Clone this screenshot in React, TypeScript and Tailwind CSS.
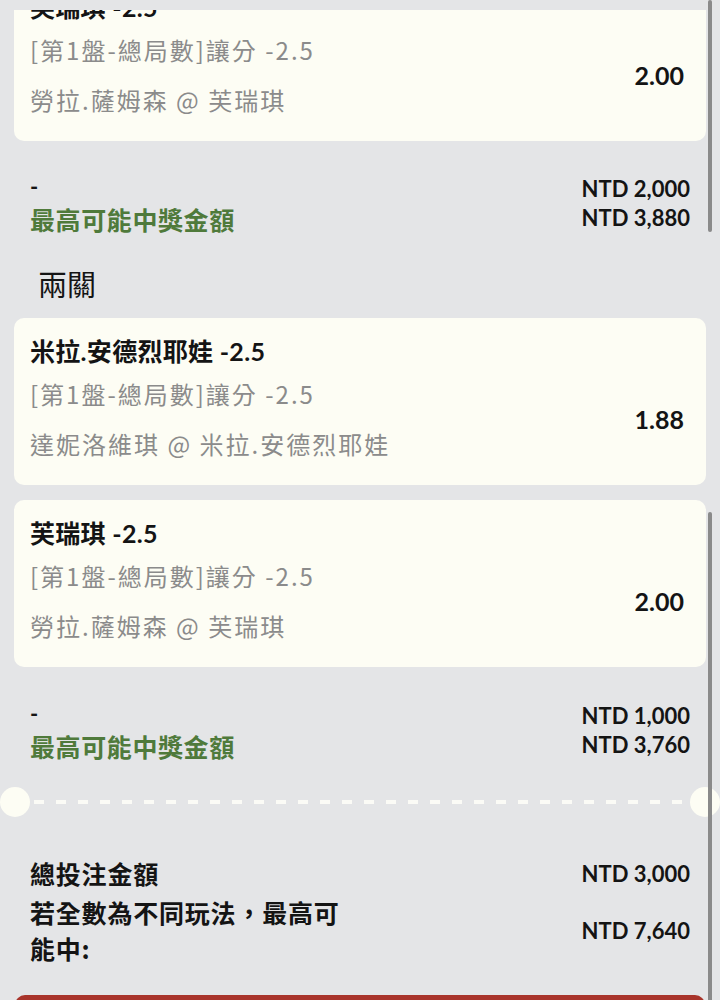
const LATIN = "font-['Lato','Noto_Sans_CJK_TC',sans-serif]";
const CJK = "font-['Noto_Sans_CJK_TC','Noto_Sans',sans-serif]";

type Bet = {
  pick: string;
  market: string;
  match: string;
  odds: string;
};

const FIRST_LEG: Bet[] = [
  {
    pick: "芙瑞琪 -2.5",
    market: "[第1盤-總局數]讓分 -2.5",
    match: "勞拉.薩姆森 @ 芙瑞琪",
    odds: "2.00",
  },
];

const PARLAY: Bet[] = [
  {
    pick: "米拉.安德烈耶娃 -2.5",
    market: "[第1盤-總局數]讓分 -2.5",
    match: "達妮洛維琪 @ 米拉.安德烈耶娃",
    odds: "1.88",
  },
  {
    pick: "芙瑞琪 -2.5",
    market: "[第1盤-總局數]讓分 -2.5",
    match: "勞拉.薩姆森 @ 芙瑞琪",
    odds: "2.00",
  },
];

/* Cards */

function BetCard({ bet, className }: { bet: Bet; className?: string }) {
  return (
    <div
      className={`mx-[14px] h-[167px] rounded-[10px] bg-[#fdfdf4] pl-[16px] pr-[22px] pt-[18px] ${className ?? ""}`}
    >
      <div className={`${LATIN} text-[25px] leading-[30px] font-bold tracking-[0.3px] text-[#141414]`}>
        {bet.pick}
      </div>
      <div className="flex flex-row items-center justify-between">
        <div className={`${CJK} text-[24px] tracking-[2px] text-[#8b8b8b]`}>
          <div className="mt-[13px] leading-[30px]">{bet.market}</div>
          <div className="mt-[20px] leading-[30px]">{bet.match}</div>
        </div>
        <span className={`${LATIN} mt-[14px] text-[25px] font-bold text-[#141414]`}>
          {bet.odds}
        </span>
      </div>
    </div>
  );
}

function Summary({
  stake,
  payout,
  className,
}: {
  stake: string;
  payout: string;
  className?: string;
}) {
  return (
    <div className={`flex flex-row justify-between px-[30px] ${className ?? ""}`}>
      <div className="flex flex-col">
        <span className={`${LATIN} text-[22px] leading-[30px] font-bold text-[#141414]`}>-</span>
        <span className={`${CJK} text-[25px] leading-[34px] font-bold tracking-[0.6px] text-[#4f7a3b]`}>
          最高可能中獎金額
        </span>
      </div>
      <div className={`${LATIN} flex flex-col items-end text-[22px] leading-[29px] font-bold text-[#141414] pt-[2px]`}>
        <span>{stake}</span>
        <span>{payout}</span>
      </div>
    </div>
  );
}

/* Divider */

function TicketDivider({ className }: { className?: string }) {
  return (
    <div className={`flex flex-row items-center h-[30px] ${className ?? ""}`}>
      <div className="w-[30px] h-[30px] rounded-full bg-[#fdfdf4] shrink-0" />
      <svg className="flex-1 mx-[4px]" height="4">
        <line
          x1="0"
          y1="2"
          x2="100%"
          y2="2"
          stroke="#fbfbf6"
          strokeWidth="4"
          strokeDasharray="10 12"
        />
      </svg>
      <div className="w-[30px] h-[30px] rounded-full bg-[#fdfdf4] shrink-0" />
    </div>
  );
}

/* Page */

export default function App() {
  return (
    <div className="relative w-[720px] h-[1000px] overflow-hidden bg-[#e4e5e7] pt-[10px]">
      <div className="h-[990px] overflow-hidden">
        <div className="-mt-[36px]">
          {FIRST_LEG.map((bet, i) => (
            <BetCard key={`single-${i}`} bet={bet} />
          ))}
          <Summary className="mt-[31px]" stake="NTD 2,000" payout="NTD 3,880" />

          <h3 className={`${CJK} mt-[29px] pl-[38px] text-[29px] leading-[36px] text-[#141414]`}>
            兩關
          </h3>

          {PARLAY.map((bet, i) => (
            <BetCard key={`parlay-${i}`} bet={bet} className={i === 0 ? "mt-[17px]" : "mt-[15px]"} />
          ))}
          <Summary className="mt-[32px]" stake="NTD 1,000" payout="NTD 3,760" />

          <TicketDivider className="mt-[24px]" />

          {/* Totals */}
          <div className="mt-[38px] px-[30px]">
            <div className="flex flex-row items-center justify-between">
              <span className={`${CJK} text-[25px] leading-[36px] font-bold tracking-[0.8px] text-[#141414]`}>
                總投注金額
              </span>
              <span className={`${LATIN} text-[22px] font-bold text-[#141414]`}>NTD 3,000</span>
            </div>
            <div className="mt-[3px] flex flex-row items-center justify-between">
              <span className={`${CJK} w-[330px] text-[25px] leading-[36px] font-bold tracking-[0.8px] text-[#141414]`}>
                若全數為不同玩法，最高可能中:
              </span>
              <span className={`${LATIN} text-[22px] font-bold text-[#141414]`}>NTD 7,640</span>
            </div>
          </div>

          <div className="mt-[29px] mx-[15px] h-[60px] rounded-t-[10px] bg-[#a8342b]" />
        </div>
      </div>

      {/* scroll indicators */}
      <div className="absolute left-[708px] top-0 w-[4px] h-[232px] rounded-full bg-[#8a8a8a]" />
      <div className="absolute left-[708px] top-[512px] w-[4px] h-[500px] rounded-full bg-[#8a8a8a]" />
    </div>
  );
}
